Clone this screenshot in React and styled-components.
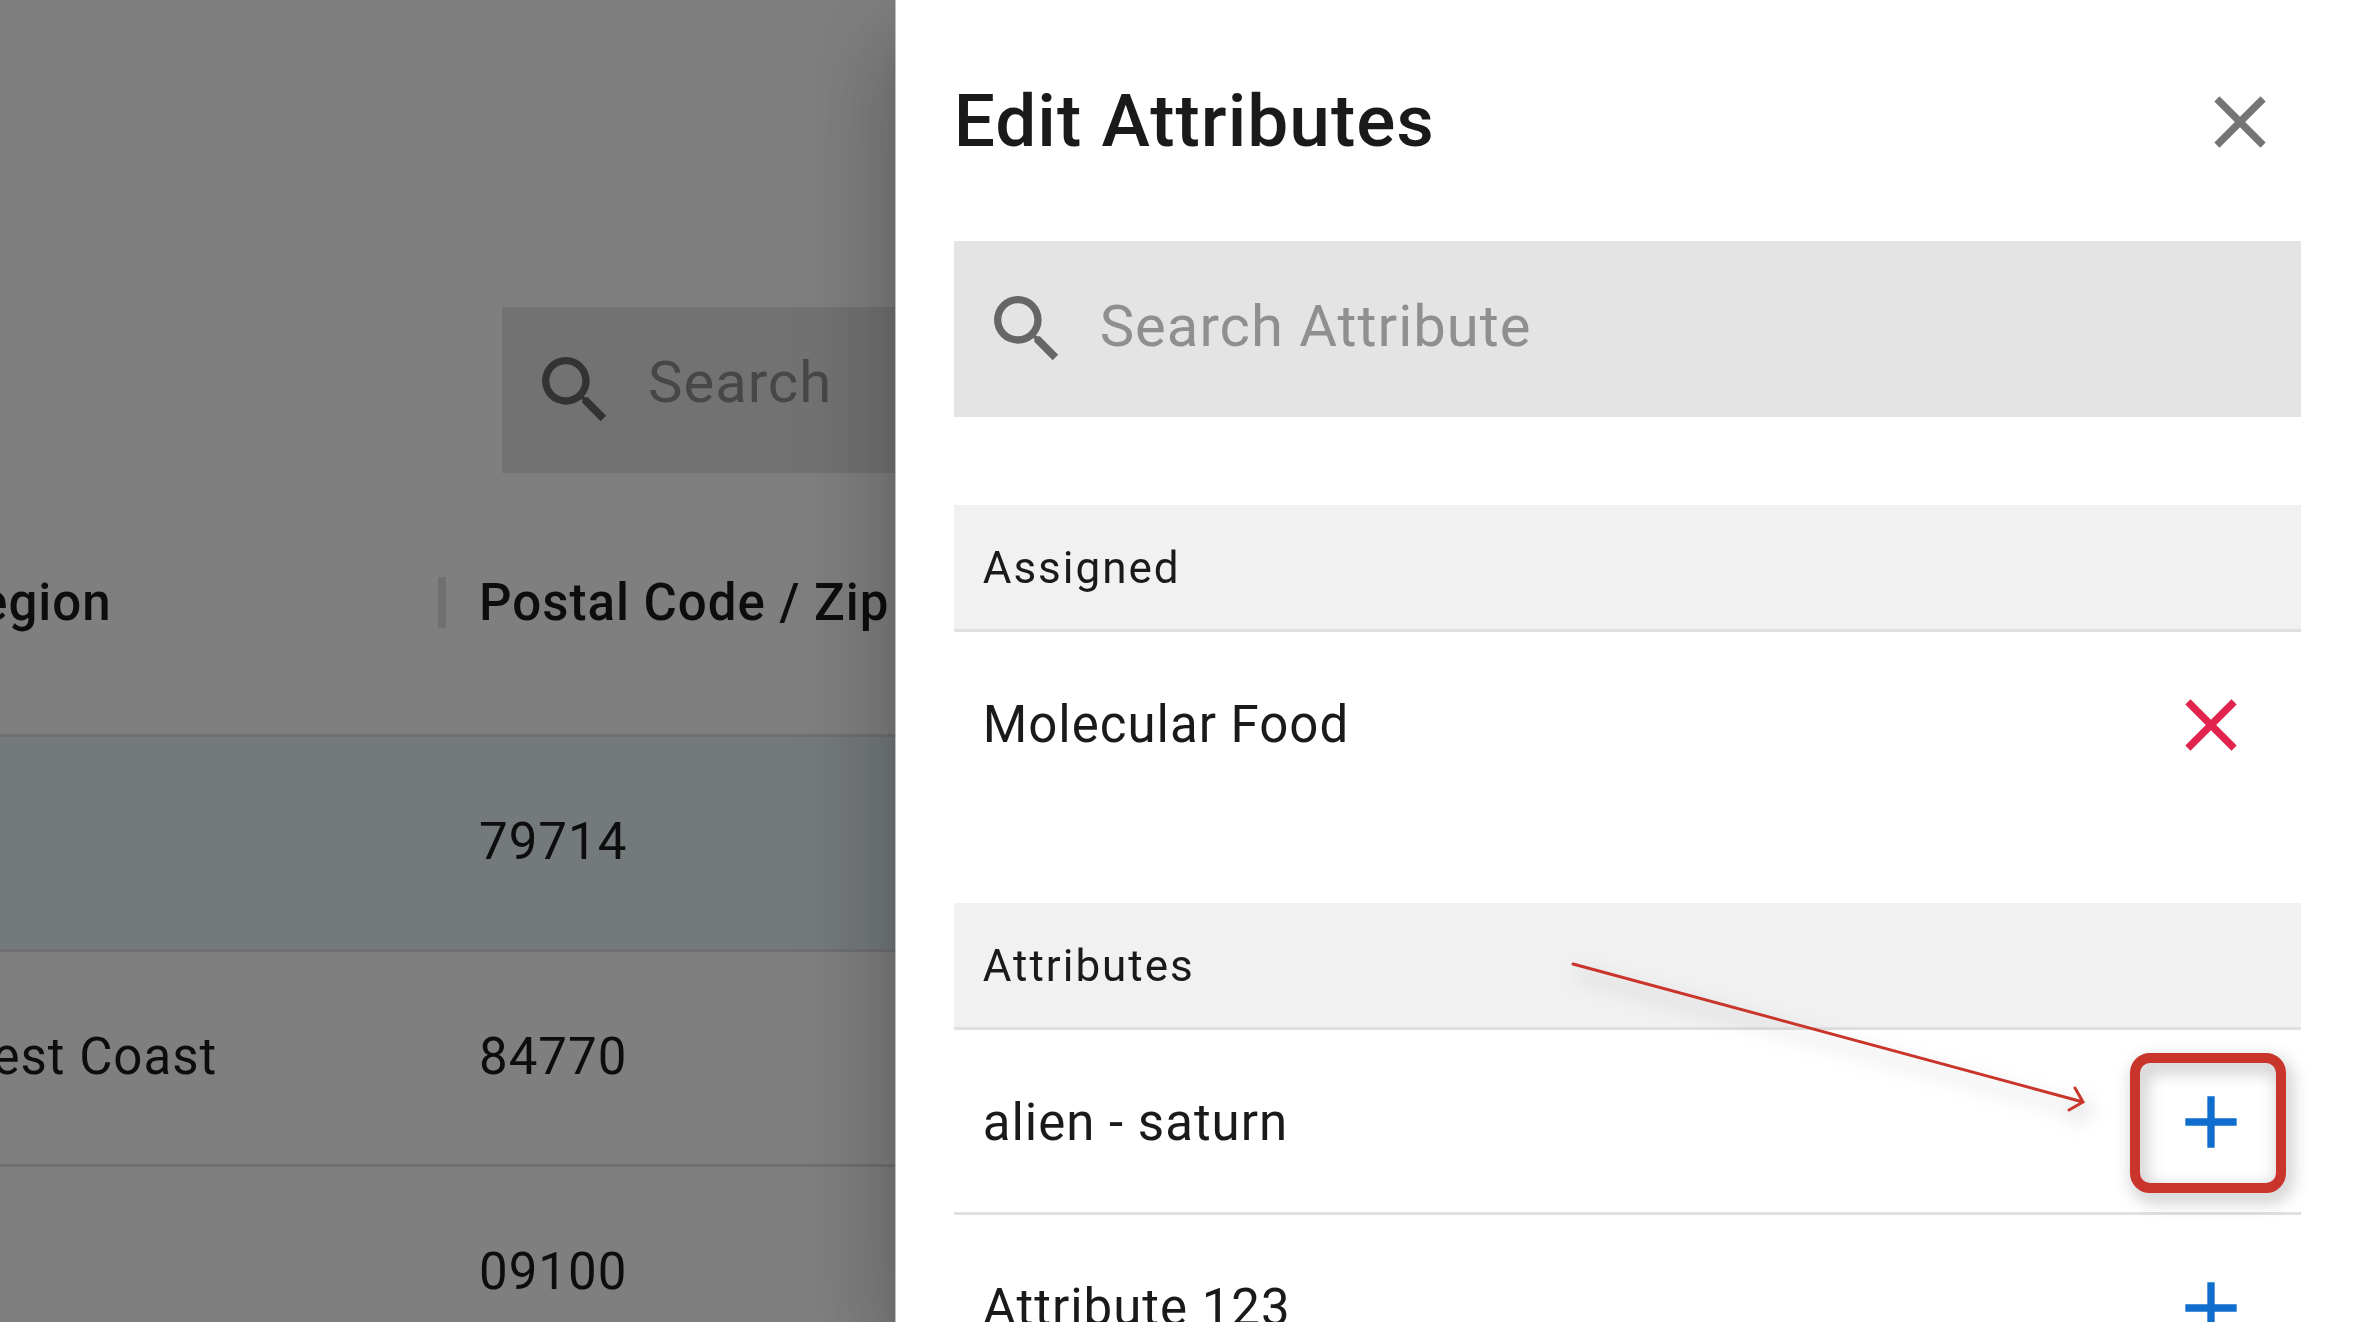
import React from "react";
import styled, { createGlobalStyle } from "styled-components";

const GlobalStyle = createGlobalStyle`
  *, *::before, *::after { box-sizing: border-box; }
  body {
    margin: 0;
    overflow: hidden;
    background: #ffffff;
    color: #1a1a1a;
    font-family: Roboto, "Liberation Sans", sans-serif;
    font-size: 51px;
    letter-spacing: 1px;
  }
`;

const Page = styled.main`
  height: 100vh;
  overflow: hidden;
  padding-top: 307px;
`;

const Toolbar = styled.div`
  display: flex;
  padding: 0 56px 0 502px;
`;

const SearchBox = styled.label`
  display: flex;
  align-items: center;
  gap: 29px;
  flex: 1;
  height: ${(p) => p.$height}px;
  padding: 0 29px;
  background: #e4e4e4;
  color: #666666;
`;

const SearchInput = styled.input`
  flex: 1;
  min-width: 0;
  height: 88px;
  padding: 0 0 ${(p) => p.$lift}px;
  border: 0;
  outline: 0;
  background: transparent;
  color: #1a1a1a;
  font: inherit;
  font-size: 58px;
  letter-spacing: inherit;

  &::placeholder {
    color: #8f8f8f;
    opacity: 1;
  }
`;

const Icon = styled.svg`
  display: block;
  flex: none;
  width: 88px;
  height: 88px;
  fill: currentColor;
`;

const Table = styled.table`
  width: calc(100% + 79px);
  margin-left: -79px;
  border-collapse: separate;
  border-spacing: 0;
  table-layout: fixed;
`;

const RegionCol = styled.col`
  width: 532px;
`;

const HeadCell = styled.th`
  height: 264px;
  padding: 0 0 2px 26px;
  border-bottom: 3px solid #e0e0e0;
  font-weight: 500;
  text-align: left;
`;

const HeadLabel = styled.div`
  display: flex;
  align-items: center;
  justify-content: space-between;
  padding-right: 7px;
`;

const Separator = styled.span`
  width: 8px;
  height: 51px;
  background: #e0e0e0;
`;

const Row = styled.tr`
  background: ${(p) => (p.$selected ? "#e9f3f8" : "transparent")};
`;

const Cell = styled.td`
  height: 215px;
  padding: 0 0 4px 26px;
  border-bottom: 3px solid #e0e0e0;
`;

const Backdrop = styled.div`
  position: fixed;
  inset: 0;
  background: rgba(0, 0, 0, 0.5);
`;

const Drawer = styled.aside`
  position: fixed;
  top: 0;
  right: 0;
  bottom: 0;
  width: calc(62vw + 1px);
  padding: 78px 56px 0 58px;
  border-left: 1px solid #bdbdbd;
  background: #ffffff;
  box-shadow:
    0 29px 37px -18px rgba(0, 0, 0, 0.2),
    0 59px 88px 7px rgba(0, 0, 0, 0.14),
    0 22px 110px 18px rgba(0, 0, 0, 0.12);
`;

const DrawerHeader = styled.header`
  display: flex;
  align-items: center;
  justify-content: space-between;
  margin-bottom: 75px;
  padding-right: 17px;
`;

const Title = styled.h1`
  margin: 0;
  padding-bottom: 2px;
  font-size: 73px;
  font-weight: 500;
  line-height: 86px;
`;

const IconButton = styled.button`
  display: block;
  padding: 0;
  border: 0;
  background: transparent;
  color: ${(p) => p.$color};
  cursor: pointer;
`;

const Section = styled.section`
  margin-top: 88px;
`;

const SectionTitle = styled.h2`
  display: flex;
  align-items: center;
  height: 127px;
  margin: 0;
  padding: 2px 0 0 29px;
  border-bottom: 3px solid #e0e0e0;
  background: #f1f1f1;
  font-size: 44px;
  font-weight: 400;
  letter-spacing: 2px;
`;

const List = styled.ul`
  margin: 0;
  padding: 0;
  list-style: none;
`;

const Item = styled.li`
  position: relative;
  display: flex;
  align-items: center;
  justify-content: space-between;
  height: 185px;
  padding: 2px 46px 0 29px;
  border-bottom: 3px solid #e0e0e0;

  &:last-child {
    height: 183px;
    border-bottom: 0;
  }
`;

const Highlight = styled.span`
  position: absolute;
  top: 23px;
  right: 15px;
  width: 156px;
  height: 140px;
  border: 10px solid #c9352b;
  border-radius: 20px;
  filter: drop-shadow(4px 7px 9px rgba(0, 0, 0, 0.3));
  pointer-events: none;
`;

const Arrow = styled.svg`
  position: absolute;
  top: -80px;
  right: 201px;
  width: 540px;
  height: 180px;
  overflow: visible;
  fill: none;
  stroke: #c9352b;
  stroke-width: 3;
  stroke-linecap: round;
  filter: drop-shadow(4px 10px 10px rgba(0, 0, 0, 0.28));
  pointer-events: none;
`;

const paths = {
  search:
    "M15.5 14h-.79l-.28-.27A6.471 6.471 0 0 0 16 9.5 6.5 6.5 0 1 0 9.5 16c1.61 0 3.09-.59 4.23-1.57l.27.28v.79l5 4.99L20.49 19l-4.99-5zm-6 0C7.01 14 5 11.99 5 9.5S7.01 5 9.5 5 14 7.01 14 9.5 11.99 14 9.5 14z",
  close:
    "M19 6.41 17.59 5 12 10.59 6.41 5 5 6.41 10.59 12 5 17.59 6.41 19 12 13.41 17.59 19 19 17.59 13.41 12z",
  add: "M19 13h-6v6h-2v-6H5v-2h6V5h2v6h6v2z",
};

function Glyph({ name }) {
  return (
    <Icon viewBox="0 0 24 24" aria-hidden="true">
      <path d={paths[name]} />
    </Icon>
  );
}

const rows = [
  { region: "", zip: "79714", selected: true },
  { region: "West Coast", zip: "84770" },
  { region: "", zip: "09100" },
];

const attributes = [
  { name: "alien - saturn", highlighted: true },
  { name: "Attribute 123" },
];

export default function App() {
  return (
    <>
      <GlobalStyle />
      <Page>
        <Toolbar>
          <SearchBox $height={166}>
            <Glyph name="search" />
            <SearchInput $lift={16} type="text" placeholder="Search" aria-label="Search" />
          </SearchBox>
        </Toolbar>
        <Table>
          <colgroup>
            <RegionCol />
            <col />
          </colgroup>
          <thead>
            <tr>
              <HeadCell scope="col">
                <HeadLabel>
                  Region
                  <Separator />
                </HeadLabel>
              </HeadCell>
              <HeadCell scope="col">Postal Code / Zip</HeadCell>
            </tr>
          </thead>
          <tbody>
            {rows.map((row) => (
              <Row key={row.zip} $selected={row.selected}>
                <Cell>{row.region}</Cell>
                <Cell>{row.zip}</Cell>
              </Row>
            ))}
          </tbody>
        </Table>
      </Page>
      <Backdrop />
      <Drawer role="dialog" aria-labelledby="drawer-title">
        <DrawerHeader>
          <Title id="drawer-title">Edit Attributes</Title>
          <IconButton type="button" $color="#757575" aria-label="Close">
            <Glyph name="close" />
          </IconButton>
        </DrawerHeader>
        <SearchBox $height={176}>
          <Glyph name="search" />
          <SearchInput
            $lift={6}
            type="text"
            placeholder="Search Attribute"
            aria-label="Search Attribute"
          />
        </SearchBox>
        <Section>
          <SectionTitle>Assigned</SectionTitle>
          <List>
            <Item>
              Molecular Food
              <IconButton type="button" $color="#e0244d" aria-label="Remove Molecular Food">
                <Glyph name="close" />
              </IconButton>
            </Item>
          </List>
        </Section>
        <Section>
          <SectionTitle>Attributes</SectionTitle>
          <List>
            {attributes.map((attribute) => (
              <Item key={attribute.name}>
                {attribute.name}
                <IconButton type="button" $color="#0f6ecd" aria-label={`Add ${attribute.name}`}>
                  <Glyph name="add" />
                </IconButton>
                {attribute.highlighted && (
                  <>
                    <Highlight />
                    <Arrow viewBox="0 0 540 180" aria-hidden="true">
                      <path d="M13 14 523 152M515 138l8 14-14 8" />
                    </Arrow>
                  </>
                )}
              </Item>
            ))}
          </List>
        </Section>
      </Drawer>
    </>
  );
}
